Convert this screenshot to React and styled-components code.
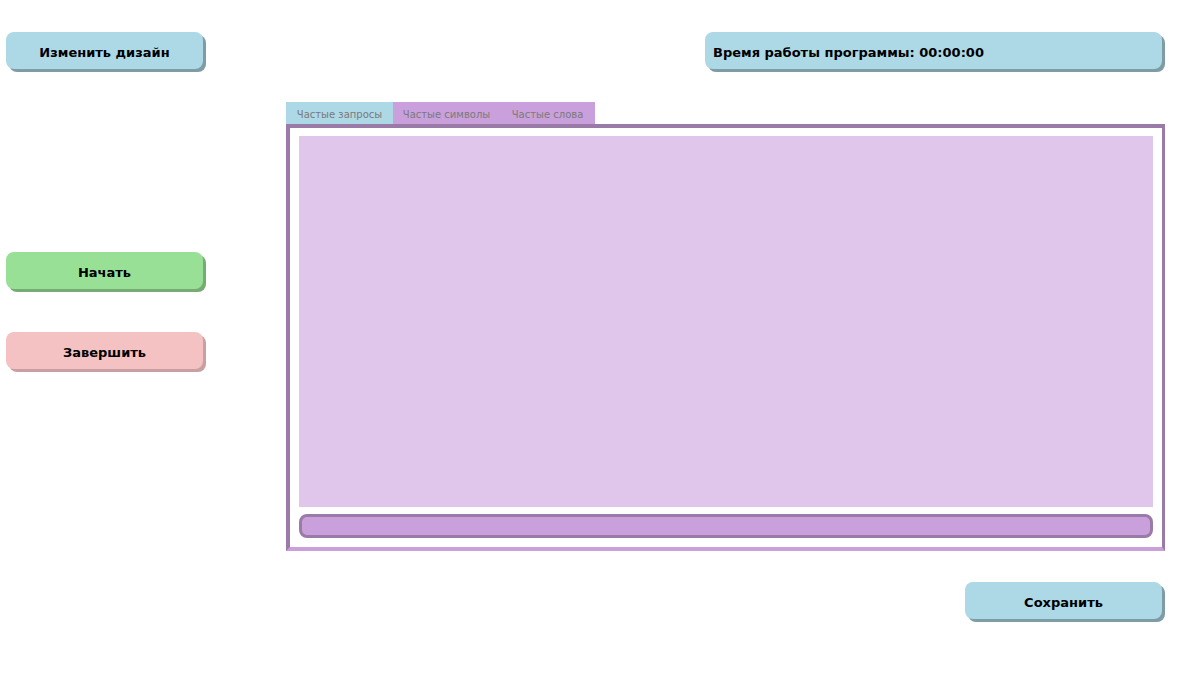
import styled, { createGlobalStyle } from "styled-components";

const GlobalStyle = createGlobalStyle`
  body {
    margin: 0;
    background: #fff;
    font-family: "DejaVu Sans", Verdana, sans-serif;
  }
`;

const colors = {
  blue: ["#add8e6", "#7e9ca6"],
  green: ["#98e095", "#77ab74"],
  pink: ["#f4c2c2", "#c9a0a1"],
};

const Page = styled.div`
  width: 1185px;
  height: 700px;
  box-sizing: border-box;
  padding: 32px 20px 0 6px;
  display: flex;
  flex-direction: column;
`;

const TopRow = styled.div`
  display: flex;
  justify-content: space-between;
  align-items: flex-start;
`;

const Button = styled.button`
  width: ${(p) => p.$width || 197}px;
  height: 37px;
  margin: 0 3px 3px 0;
  border: none;
  border-radius: 8px;
  background: ${(p) => colors[p.$tone || "blue"][0]};
  box-shadow: 3px 3px 0 ${(p) => colors[p.$tone || "blue"][1]};
  font-family: "DejaVu Sans", Verdana, sans-serif;
  font-weight: bold;
  font-size: 13px;
  color: #000;
  padding: 3px 0 0;
  display: flex;
  align-items: center;
  justify-content: ${(p) => (p.$left ? "flex-start" : "center")};
  padding-left: ${(p) => (p.$left ? "8px" : "0")};
  cursor: pointer;
`;

const Main = styled.div`
  display: flex;
  margin-top: 30px;
`;

const Side = styled.div`
  width: 200px;
  display: flex;
  flex-direction: column;
  gap: 40px;
  padding-top: 150px;
`;

const Workspace = styled.div`
  margin-left: 80px;
  width: 880px;
  display: flex;
  flex-direction: column;
`;

const Tabs = styled.div`
  display: flex;
  height: 22px;
`;

const Tab = styled.div`
  width: ${(p) => p.$width}px;
  background: ${(p) => (p.$active ? "#add8e6" : "#c9a0dc")};
  color: #7a7a7a;
  font-size: 10px;
  display: flex;
  align-items: center;
  justify-content: center;
  padding-top: 2px;
  box-sizing: border-box;
`;

const Panel = styled.div`
  height: 427px;
  box-sizing: border-box;
  border: 4px solid #9a7aa6;
  border-bottom-color: #c9a0dc;
  border-right-width: 3px;
  padding: 8px 9px 9px 9px;
  display: flex;
  flex-direction: column;
  gap: 7px;
`;

const Output = styled.div`
  flex: 1;
  background: #dfc6ea;
`;

const Progress = styled.div`
  height: 24px;
  box-sizing: border-box;
  border: 3px solid #9a7aa6;
  border-radius: 8px;
  background: #c9a0dc;
`;

const Footer = styled.div`
  display: flex;
  justify-content: flex-end;
  margin-top: 31px;
`;

export default function App() {
  return (
    <>
      <GlobalStyle />
      <Page>
        <TopRow>
          <Button>Изменить дизайн</Button>
          <Button $width={457} $left>
            Время работы программы: 00:00:00
          </Button>
        </TopRow>
        <Main>
          <Side>
            <Button $tone="green">Начать</Button>
            <Button $tone="pink">Завершить</Button>
          </Side>
          <Workspace>
            <Tabs>
              <Tab $active $width={107}>Частые запросы</Tab>
              <Tab $width={107}>Частые символы</Tab>
              <Tab $width={95}>Частые слова</Tab>
            </Tabs>
            <Panel>
              <Output />
              <Progress />
            </Panel>
            <Footer>
              <Button>Сохранить</Button>
            </Footer>
          </Workspace>
        </Main>
      </Page>
    </>
  );
}
